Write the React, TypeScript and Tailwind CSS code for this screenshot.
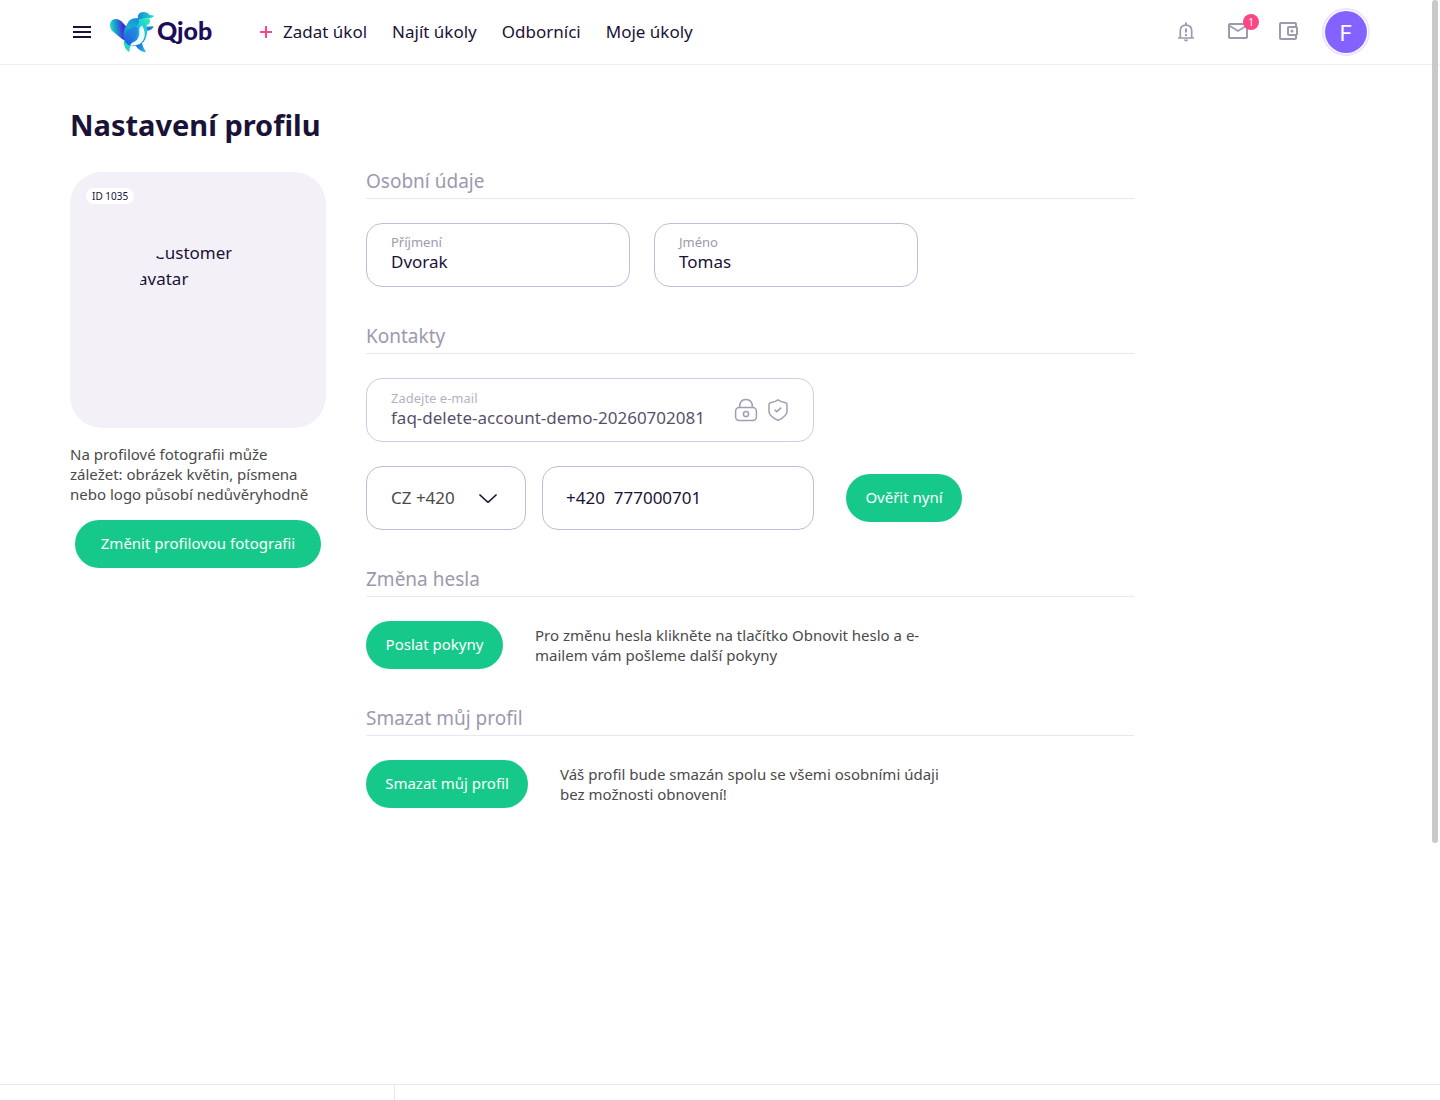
import React from "react";
import { MdMailOutline, MdMenu, MdOutlineAccountBalanceWallet } from "react-icons/md";

const NAV_LINKS = ["Najít úkoly", "Odborníci", "Moje úkoly"];

const BirdLogo: React.FC = () => (
  <svg width="46" height="42" viewBox="147 33 138 126" aria-hidden="true">
    <defs>
      <linearGradient id="wing" gradientUnits="userSpaceOnUse" x1="152" y1="90" x2="204" y2="84">
        <stop offset="0" stopColor="#1fe3bd" />
        <stop offset="0.4" stopColor="#1b86d4" />
        <stop offset="0.75" stopColor="#5020d6" />
        <stop offset="1" stopColor="#2a5ce0" />
      </linearGradient>
      <linearGradient id="raised" gradientUnits="userSpaceOnUse" x1="228" y1="54" x2="194" y2="112">
        <stop offset="0" stopColor="#1b7fe0" />
        <stop offset="0.5" stopColor="#14b4cf" />
        <stop offset="1" stopColor="#1c74e0" />
      </linearGradient>
      <linearGradient id="body" gradientUnits="userSpaceOnUse" x1="268" y1="58" x2="200" y2="130">
        <stop offset="0" stopColor="#27f2bd" />
        <stop offset="0.4" stopColor="#1fc0dc" />
        <stop offset="1" stopColor="#1b63e2" />
      </linearGradient>
      <linearGradient id="cap" x1="0" y1="0" x2="1" y2="0">
        <stop offset="0" stopColor="#1787d8" />
        <stop offset="1" stopColor="#22e0c4" />
      </linearGradient>
      <linearGradient id="tail" x1="0" y1="0" x2="1" y2="1">
        <stop offset="0" stopColor="#1a50dc" />
        <stop offset="1" stopColor="#1fc6dc" />
      </linearGradient>
    </defs>
    <path d="M191 122Q191 145 208 157Q207 143 215 134L203 116Z" fill="#20d8c4" />
    <path d="M226 136L244 124Q248 142 258 156Q240 158 226 136Z" fill="url(#tail)" />
    <path d="M256 80L281 79Q279 91 256 93Z" fill="#1b7fdb" />
    <path d="M150 76Q150 58 167 57Q176 57 184 64L200 80L208 118Q196 124 186 117L156 92Q150 86 150 76Z" fill="url(#wing)" />
    <path d="M207 62Q216 55 234 54L268 55Q275 70 260 76Q264 100 256 118Q246 139 216 139Q193 134 191 110Q190 94 198 80Z" fill="url(#body)" />
    <path d="M191 110Q188 92 198 78Q206 62 218 56Q230 54 236 55Q241 74 224 84Q206 92 202 115Z" fill="url(#raised)" fillOpacity="0.85" />
    <path d="M233 82Q238 105 211 127Q192 125 195 107Q198 92 214 84Q224 79 233 82Z" fill="#2a63e4" fillOpacity="0.5" />
    <path d="M247 77Q260 101 250 120Q239 139 211 137Q212 129 222 126Q241 118 238 86Q240 79 247 77Z" fill="#effefd" />
    <path d="M234 56Q231 36 250 36Q263 36 268 44L282 47Q279 55 260 54Q247 55 240 58Z" fill="url(#cap)" />
  </svg>
);

const PlusIcon: React.FC = () => (
  <svg width="20" height="20" viewBox="0 0 20 20" stroke="#fb4587" strokeWidth="2">
    <path d="M10 4V16M4 10H16" />
  </svg>
);

const BellIcon: React.FC = () => (
  <svg width="24" height="24" viewBox="0 0 24 24" fill="none" stroke="currentColor" strokeWidth="1.7">
    <path d="M4 18H20M6.300 18V11C6.300 7.500 8.500 5.200 12 5.200S17.700 7.500 17.700 11V18" />
    <path d="M12 2.500V5M12 8.500V12.500M12 14V16" strokeWidth="2" />
    <path d="M10 19.500H14A2 2 0 0 1 10 19.500Z" fill="currentColor" stroke="none" />
  </svg>
);

const LockIcon: React.FC = () => (
  <svg width="24" height="24" viewBox="0 0 24 24" fill="none" stroke="currentColor" strokeWidth="1.5">
    <rect x="1.6" y="9.6" width="20.8" height="12.8" rx="3.6" />
    <path d="M5.500 9.600C5.500 4.500 7.200 1.600 12 1.600S18.500 4.500 18.500 9.600" />
    <circle cx="12" cy="16" r="2.6" />
  </svg>
);

const ShieldIcon: React.FC = () => (
  <svg width="24" height="24" viewBox="0 0 24 24" fill="none" stroke="currentColor" strokeWidth="1.5" strokeLinejoin="round">
    <path d="M12 1.800C9.500 3.500 7 4.200 4.500 4.700C3.600 4.900 3 5.600 3 6.500V13.500C3 17.800 8.500 20.700 12 22.400C15.500 20.700 21 17.800 21 13.500V6.500C21 5.600 20.400 4.900 19.500 4.700C17 4.200 14.500 3.500 12 1.800Z" />
    <path d="M8.600 11.700L10.800 13.600L15.200 9.600" />
  </svg>
);

const Header: React.FC = () => (
  <header className="border-b border-[#f0f0f3]">
    <div className="mx-auto flex h-16 max-w-[1348px] items-center px-6">
      <button aria-label="Menu" className="flex size-6 items-center justify-center">
        <MdMenu size={24} />
      </button>
      <a href="#" className="ml-[15px] flex w-[106px] items-center gap-[2px]">
        <BirdLogo />
        <span className="pb-1 font-['Lato'] text-[25px] leading-8 font-black text-[#1d0c5a]">Qjob</span>
      </a>
      <nav className="ml-[41px] flex items-center gap-[25px] text-[17px]">
        <a href="#" className="flex items-center gap-[7px]">
          <PlusIcon />
          Zadat úkol
        </a>
        {NAV_LINKS.map((label) => (
          <a key={label} href="#">
            {label}
          </a>
        ))}
      </nav>
      <div className="ml-auto flex items-center text-[#9d99af]">
        <button aria-label="Oznámení">
          <BellIcon />
        </button>
        <button aria-label="Zprávy" className="relative ml-7 pb-[2px]">
          <MdMailOutline size={24} />
          <span className="absolute -top-[5px] -right-[9px] flex size-4 items-center justify-center rounded-full bg-[#fd4688] text-[10px] text-white">
            1
          </span>
        </button>
        <button aria-label="Peněženka" className="ml-[26px] pb-[2px]">
          <MdOutlineAccountBalanceWallet size={24} />
        </button>
        <button
          aria-label="Profil"
          className="ml-[22px] flex size-12 items-center justify-center rounded-full border-2 border-[#ebe6fb]"
        >
          <span className="flex size-[42px] items-center justify-center rounded-full bg-[#8462ff] pt-[2px] font-['Inter'] text-[22px] text-white">
            F
          </span>
        </button>
      </div>
    </div>
  </header>
);

interface SectionProps {
  title: string;
  children: React.ReactNode;
}

const Section: React.FC<SectionProps> = ({ title, children }) => (
  <section>
    <h2 className="mb-6 border-b border-[#e9e7f5] pb-2 text-[19px] leading-[18px] text-[#9c99ae]">{title}</h2>
    {children}
  </section>
);

interface FieldProps {
  id: string;
  label: string;
  value: string;
}

const Field: React.FC<FieldProps> = ({ id, label, value }) => (
  <div className="flex h-16 w-[264px] flex-col rounded-2xl border border-[#c1bcdb] px-6 pt-[10px]">
    <label htmlFor={id} className="text-[13px] leading-4 text-[#9c99ae]">
      {label}
    </label>
    <input id={id} defaultValue={value} className="w-full text-[17px] leading-6 outline-none" />
  </div>
);

const GreenButton: React.FC<{ className: string; children: React.ReactNode }> = ({ className, children }) => (
  <button
    className={`h-12 shrink-0 rounded-full bg-[#16c98a] pb-[2px] text-[15px] whitespace-nowrap text-white ${className}`}
  >
    {children}
  </button>
);

const Sidebar: React.FC = () => (
  <aside className="flex w-64 shrink-0 flex-col">
    <div className="relative flex h-64 items-center justify-center rounded-[32px] bg-[#f3f1f7]">
      <span className="absolute top-4 left-4 rounded-full bg-white px-[6px] text-[10px] leading-4">ID 1035</span>
      <div className="size-[120px] overflow-hidden rounded-full indent-4 text-[17px] leading-[26px]">
        Customer avatar
      </div>
    </div>
    <p className="mt-4 pr-2 text-[15px] leading-5 text-[#4a4a4a]">
      Na profilové fotografii může záležet: obrázek květin, písmena nebo logo působí nedůvěryhodně
    </p>
    <GreenButton className="mt-4 w-[246px] self-center">Změnit profilovou fotografii</GreenButton>
  </aside>
);

const ProfileForm: React.FC = () => (
  <div className="flex max-w-3xl grow flex-col gap-10">
    <Section title="Osobní údaje">
      <div className="flex gap-6">
        <Field id="surname" label="Příjmení" value="Dvorak" />
        <Field id="name" label="Jméno" value="Tomas" />
      </div>
    </Section>

    <Section title="Kontakty">
      <div className="flex h-16 w-[448px] items-center rounded-2xl border border-[#c1bcdb] pr-[23px] pl-6 opacity-75">
        <div className="flex min-w-0 grow flex-col">
          <label htmlFor="email" className="text-[13px] leading-4 text-[#9c99ae]">
            Zadejte e-mail
          </label>
          <input
            id="email"
            readOnly
            value="faq-delete-account-demo-20260702081"
            className="w-full text-[17px] leading-6 outline-none"
          />
        </div>
        <div className="ml-4 flex gap-2 text-[#827e99]">
          <LockIcon />
          <ShieldIcon />
        </div>
      </div>
      <div className="mt-6 flex items-center">
        <div className="relative flex h-16 w-40 items-center rounded-2xl border border-[#c1bcdb]">
          <select
            aria-label="Předvolba"
            className="size-full appearance-none rounded-2xl px-6 text-[17px] text-[#4a4a4a] outline-none"
          >
            <option>CZ +420</option>
          </select>
          <svg
            className="pointer-events-none absolute right-7"
            width="18"
            height="9"
            viewBox="0 0 18 9"
            fill="none"
            stroke="currentColor"
            strokeWidth="1.7"
            strokeLinecap="round"
            strokeLinejoin="round"
          >
            <path d="M1 1L8 7.500Q9 8.300 10 7.500L17 1" />
          </svg>
        </div>
        <input
          aria-label="Telefon"
          type="tel"
          defaultValue="+420  777000701"
          className="ml-4 h-16 w-[272px] rounded-2xl border border-[#c1bcdb] px-[23px] pb-[2px] text-[17px] outline-none"
        />
        <GreenButton className="ml-8 w-[116px]">Ověřit nyní</GreenButton>
      </div>
    </Section>

    <Section title="Změna hesla">
      <div className="flex items-center gap-8">
        <GreenButton className="w-[137px]">Poslat pokyny</GreenButton>
        <p className="max-w-[400px] text-[15px] leading-5 text-[#4a4a4a]">
          Pro změnu hesla klikněte na tlačítko Obnovit heslo a e-mailem vám pošleme další pokyny
        </p>
      </div>
    </Section>

    <Section title="Smazat můj profil">
      <div className="flex items-center gap-8">
        <GreenButton className="w-[162px]">Smazat můj profil</GreenButton>
        <p className="max-w-[400px] text-[15px] leading-5 text-[#4a4a4a]">
          Váš profil bude smazán spolu se všemi osobními údaji bez možnosti obnovení!
        </p>
      </div>
    </Section>
  </div>
);

const App: React.FC = () => {
  return (
    <div className="flex min-h-screen flex-col bg-white font-['Noto_Sans',sans-serif] text-[#1b1238]">
      <Header />
      <main className="mx-auto w-full max-w-[1348px] grow px-6 pt-10">
        <h1 className="mb-[27px] text-[29px] leading-10 font-bold">Nastavení profilu</h1>
        <div className="flex gap-10">
          <Sidebar />
          <ProfileForm />
        </div>
      </main>
      <footer className="flex h-4 border-t border-[#e9e5f8]">
        <div className="w-[395px] border-r border-[#e9e5f8]" />
      </footer>
      <div className="fixed top-0 right-[2px] h-[843px] w-[6px] rounded-full bg-[#c9c9c9]" />
    </div>
  );
};

export default App;
